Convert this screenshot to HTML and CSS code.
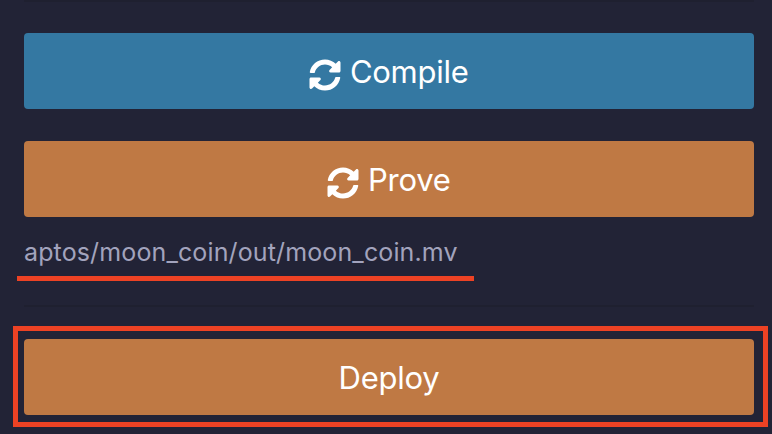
FILE: index.html
```html
<!DOCTYPE html>
<html lang="en">
<head>
<meta charset="utf-8">
<title>Deploy module</title>
<link rel="stylesheet" href="styles.css">
</head>
<body>
<svg class="defs" aria-hidden="true">
  <symbol id="sync" viewBox="0 0 512 512"><path fill="currentColor" d="M370.72 133.28C339.458 104.008 298.888 87.962 255.848 88c-77.458.068-144.328 53.178-162.791 126.85-1.344 5.363-6.122 9.15-11.651 9.15H24.103c-7.498 0-13.194-6.807-11.807-14.176C33.933 94.924 134.813 8 256 8c66.448 0 126.791 26.136 171.315 68.685L463.03 40.97C478.149 25.851 504 36.559 504 57.941V192c0 13.255-10.745 24-24 24H345.941c-21.382 0-32.09-25.851-16.971-40.971l41.75-41.749zM32 296h134.059c21.382 0 32.09 25.851 16.971 40.971l-41.75 41.75c31.262 29.273 71.835 45.319 114.876 45.28 77.418-.07 144.315-53.144 162.787-126.849 1.344-5.363 6.122-9.15 11.651-9.15h57.304c7.498 0 13.194 6.807 11.807 14.176C478.067 417.076 377.187 504 256 504c-66.448 0-126.791-26.136-171.315-68.685L48.97 471.03C33.851 486.149 8 475.441 8 454.059V320c0-13.255 10.745-24 24-24z"/></symbol>
</svg>
<main class="panel">
  <hr class="rule">
  <button class="btn btn-compile"><svg class="icon"><use href="#sync"/></svg><span class="label">Compile</span></button>
  <button class="btn btn-prove"><svg class="icon"><use href="#sync"/></svg><span class="label">Prove</span></button>
  <div class="file"><span class="path">aptos/moon_coin/out/moon_coin.mv</span></div>
  <hr class="rule">
  <div class="highlight"><button class="btn"><span class="label">Deploy</span></button></div>
</main>
</body>
</html>
```

FILE: styles.css
```css
* { box-sizing: border-box; }
body {
  margin: 0;
  height: 434px;
  overflow: hidden;
  background: #222336;
  font-family: Inter, "Liberation Sans", sans-serif;
}
.defs { display: none; }
.panel { display: flex; flex-direction: column; }
.rule { width: 730px; height: 2px; margin: 0 0 0 24px; border: 0; background: #1f2030; }
.btn {
  display: flex;
  align-items: center;
  justify-content: center;
  width: 730px;
  height: 76px;
  margin: 0;
  padding: 0;
  border: 0;
  border-radius: 4px;
  background: #bf7944;
  color: #fff;
  font: 400 31px/40px Inter, "Liberation Sans", sans-serif;
  letter-spacing: -0.25px;
}
.btn-compile { margin: 31px 0 0 24px; background: #3478a2; }
.btn-prove { margin: 32px 0 0 24px; }
.icon { width: 32px; height: 32px; margin: 8px 8.5px 0 0; }
.label { padding-top: 2px; }
.file {
  width: 457px;
  height: 64px;
  margin: 0 0 24px 17px;
  padding: 19px 0 0 7px;
  border-bottom: 5px solid #ed4224;
  color: #a2a3bd;
  font-size: 25px;
  letter-spacing: 0.13px;
  line-height: 32px;
  white-space: nowrap;
}
.highlight {
  width: 755px;
  height: 101px;
  margin: 19px 0 0 13px;
  padding: 8px 0 0 6px;
  border: 5px solid #ed4224;
}
```
